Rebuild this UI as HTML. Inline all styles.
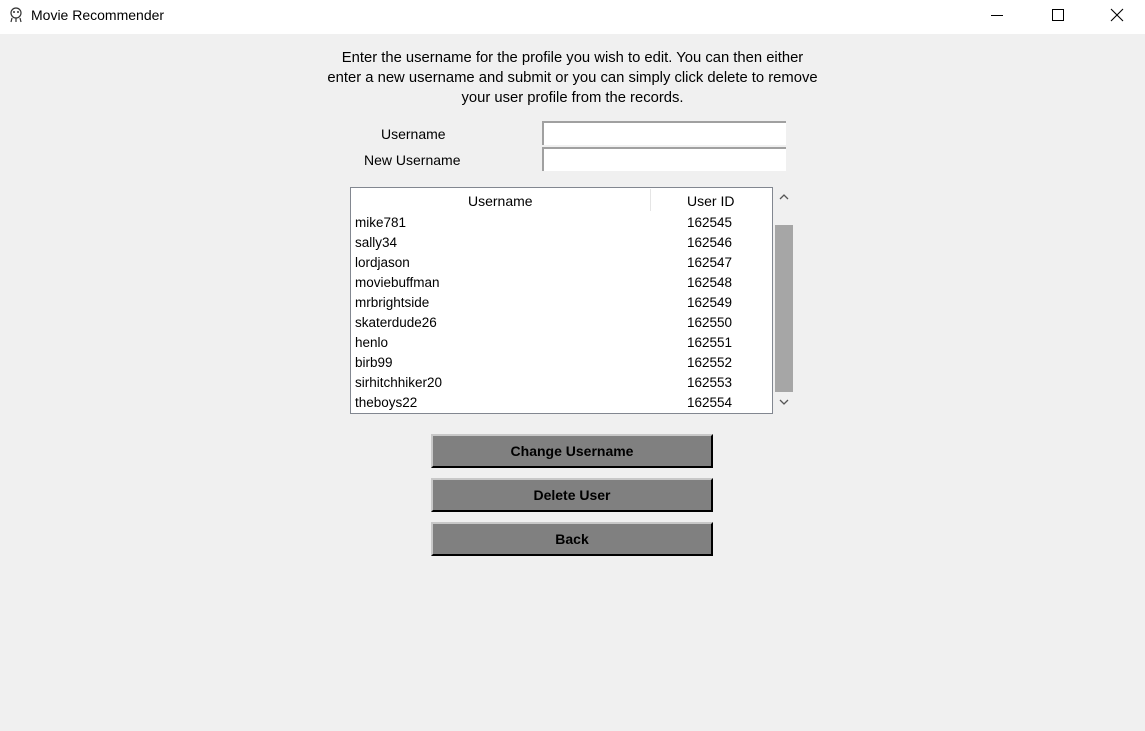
<!DOCTYPE html>
<html><head><meta charset="utf-8"><style>
*{margin:0;padding:0;box-sizing:border-box}
body{width:1145px;height:731px;background:#f0f0f0;font-family:"Liberation Sans",sans-serif;position:relative;overflow:hidden;color:#000}
.a{position:absolute;white-space:nowrap}
.title{left:0;top:0;width:1145px;height:34px;background:#fff}
.t{font-size:13.5px}
.entry{background:#fff;border-top:2px solid #a0a0a0;border-left:2px solid #a0a0a0;width:244px;height:24px}
.btn{left:431px;width:282px;height:34px;background:#808080;border-top:2px solid #c8c8c8;border-left:2px solid #c8c8c8;border-right:2px solid #000;border-bottom:2px solid #000;font-weight:bold;font-size:14px;text-align:center;line-height:30px}
.row{left:355px;font-size:13.5px}
.id{left:687px;font-size:13.5px}
</style></head><body>
<div class="a title"></div>
<svg class="a" style="left:8px;top:7px" width="16" height="16" viewBox="0 0 16 16"><circle cx="8" cy="6" r="5" fill="none" stroke="#333" stroke-width="1.2"/><circle cx="6" cy="5" r="1" fill="#333"/><circle cx="10" cy="5" r="1" fill="#333"/><path d="M4 11 L3 15 M8 11 V15 M12 11 L13 15" stroke="#333" stroke-width="1.2"/></svg>
<div class="a t" style="left:31px;top:7px;font-size:14px">Movie Recommender</div>
<div class="a" style="left:991px;top:15px;width:12px;height:1px;background:#000"></div>
<div class="a" style="left:1052px;top:9px;width:12px;height:12px;border:1px solid #000"></div>
<svg class="a" style="left:1110px;top:8px" width="14" height="14"><path d="M1 1L13 13M13 1L1 13" stroke="#000" stroke-width="1.1"/></svg>

<div class="a" style="left:300px;width:545px;top:48px;text-align:center;line-height:20px;white-space:normal;font-size:14.8px">Enter the username for the profile you wish to edit. You can then either<br>enter a new username and submit or you can simply click delete to remove<br>your user profile from the records.</div>
<div class="a t" style="left:381px;top:126px;font-size:14px">Username</div>
<div class="a t" style="left:364px;top:152px;font-size:14px">New Username</div>
<div class="a entry" style="left:542px;top:121px"></div>
<div class="a entry" style="left:542px;top:147px"></div>

<div class="a" style="left:350px;top:187px;width:423px;height:227px;background:#fff;border:1px solid #828790"></div>
<div class="a" style="left:650px;top:189px;width:1px;height:22px;background:#e5e5e5"></div>
<div class="a t" style="left:468px;top:193px;font-size:14px">Username</div>
<div class="a t" style="left:687px;top:193px;font-size:14px">User ID</div>
<div class="a row" style="top:215px">mike781</div><div class="a id" style="top:215px">162545</div>
<div class="a row" style="top:235px">sally34</div><div class="a id" style="top:235px">162546</div>
<div class="a row" style="top:255px">lordjason</div><div class="a id" style="top:255px">162547</div>
<div class="a row" style="top:275px">moviebuffman</div><div class="a id" style="top:275px">162548</div>
<div class="a row" style="top:295px">mrbrightside</div><div class="a id" style="top:295px">162549</div>
<div class="a row" style="top:315px">skaterdude26</div><div class="a id" style="top:315px">162550</div>
<div class="a row" style="top:335px">henlo</div><div class="a id" style="top:335px">162551</div>
<div class="a row" style="top:355px">birb99</div><div class="a id" style="top:355px">162552</div>
<div class="a row" style="top:375px">sirhitchhiker20</div><div class="a id" style="top:375px">162553</div>
<div class="a row" style="top:395px">theboys22</div><div class="a id" style="top:395px">162554</div>

<svg class="a" style="left:779px;top:193px" width="10" height="8"><path d="M1 6L5 2L9 6" fill="none" stroke="#555" stroke-width="1.3"/></svg>
<div class="a" style="left:775px;top:225px;width:18px;height:167px;background:#a6a6a6"></div>
<svg class="a" style="left:779px;top:398px" width="10" height="8"><path d="M1 2L5 6L9 2" fill="none" stroke="#555" stroke-width="1.3"/></svg>

<div class="a btn" style="top:434px">Change Username</div>
<div class="a btn" style="top:478px">Delete User</div>
<div class="a btn" style="top:522px">Back</div>
</body></html>
